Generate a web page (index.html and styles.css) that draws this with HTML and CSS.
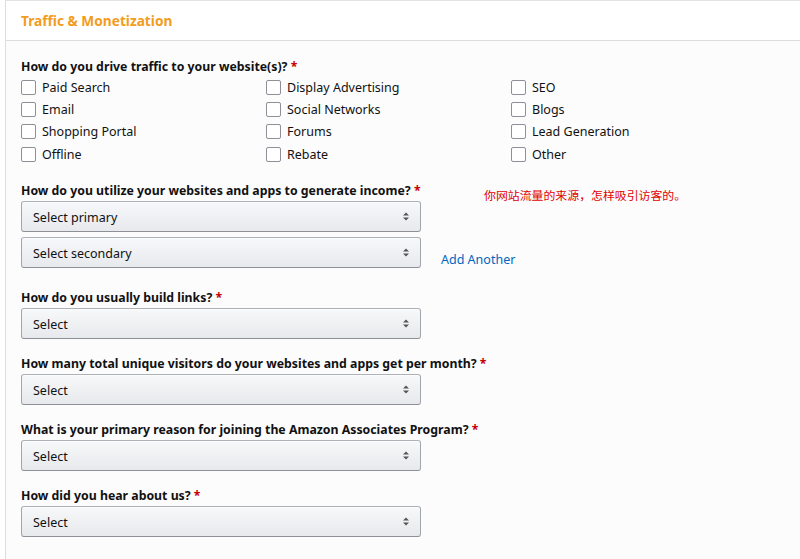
FILE: index.html
```html
<!DOCTYPE html>
<html>
<head>
<meta charset="utf-8">
<link rel="stylesheet" href="styles.css">
</head>
<body>
<div class="panel">
  <div class="panel-head"><h2 class="title">Traffic &amp; Monetization</h2></div>
  <div class="panel-body">
    <div class="q q-first">
      <div class="qlabel">How do you drive traffic to your website(s)? <span class="req">*</span></div>
      <div class="checks">
        <label class="chk"><span class="box"></span>Paid Search</label>
        <label class="chk"><span class="box"></span>Display Advertising</label>
        <label class="chk"><span class="box"></span>SEO</label>
        <label class="chk"><span class="box"></span>Email</label>
        <label class="chk"><span class="box"></span>Social Networks</label>
        <label class="chk"><span class="box"></span>Blogs</label>
        <label class="chk"><span class="box"></span>Shopping Portal</label>
        <label class="chk"><span class="box"></span>Forums</label>
        <label class="chk"><span class="box"></span>Lead Generation</label>
        <label class="chk"><span class="box"></span>Offline</label>
        <label class="chk"><span class="box"></span>Rebate</label>
        <label class="chk"><span class="box"></span>Other</label>
      </div>
    </div>

    <div class="q q-income">
      <div class="qrow">
        <div class="qlabel qlabel-fixed">How do you utilize your websites and apps to generate income? <span class="req">*</span></div>
        <div class="note">你网站流量的来源，怎样吸引访客的。</div>
      </div>
      <div class="sel"><span class="sel-text">Select primary</span><svg class="arr" width="6" height="9" viewBox="0 0 6 9"><path d="M0 3.5L3 0.5L6 3.5Z M0 5.5L3 8.5L6 5.5Z" fill="#555"/></svg></div>
      <div class="selrow">
        <div class="sel"><span class="sel-text">Select secondary</span><svg class="arr" width="6" height="9" viewBox="0 0 6 9"><path d="M0 3.5L3 0.5L6 3.5Z M0 5.5L3 8.5L6 5.5Z" fill="#555"/></svg></div>
        <a class="add">Add Another</a>
      </div>
    </div>

    <div class="q">
      <div class="qlabel">How do you usually build links? <span class="req">*</span></div>
      <div class="sel"><span class="sel-text">Select</span><svg class="arr" width="6" height="9" viewBox="0 0 6 9"><path d="M0 3.5L3 0.5L6 3.5Z M0 5.5L3 8.5L6 5.5Z" fill="#555"/></svg></div>
    </div>

    <div class="q">
      <div class="qlabel">How many total unique visitors do your websites and apps get per month? <span class="req">*</span></div>
      <div class="sel"><span class="sel-text">Select</span><svg class="arr" width="6" height="9" viewBox="0 0 6 9"><path d="M0 3.5L3 0.5L6 3.5Z M0 5.5L3 8.5L6 5.5Z" fill="#555"/></svg></div>
    </div>

    <div class="q">
      <div class="qlabel">What is your primary reason for joining the Amazon Associates Program? <span class="req">*</span></div>
      <div class="sel"><span class="sel-text">Select</span><svg class="arr" width="6" height="9" viewBox="0 0 6 9"><path d="M0 3.5L3 0.5L6 3.5Z M0 5.5L3 8.5L6 5.5Z" fill="#555"/></svg></div>
    </div>

    <div class="q">
      <div class="qlabel">How did you hear about us? <span class="req">*</span></div>
      <div class="sel"><span class="sel-text">Select</span><svg class="arr" width="6" height="9" viewBox="0 0 6 9"><path d="M0 3.5L3 0.5L6 3.5Z M0 5.5L3 8.5L6 5.5Z" fill="#555"/></svg></div>
    </div>
  </div>
</div>
</body>
</html>
```
FILE: styles.css
```css
html, body {
  margin: 0;
  padding: 0;
  background: #ffffff;
  font-family: "Noto Sans", "Liberation Sans", Arial, sans-serif;
  color: #111111;
  font-size: 12.5px;
}
.panel {
  margin-left: 5px;
  margin-right: -10px;
  border: 1px solid #dddddd;
  border-top-color: #e3e3e3;
  height: 570px;
  background: #fcfcfd;
}
.panel-head {
  background: #ffffff;
  border-bottom: 1px solid #dddddd;
  height: 39px;
  padding: 0 15px;
  display: flex;
  align-items: center;
}
.title {
  margin: 0;
  font-size: 13.7px;
  font-weight: 700;
  color: #f39c20;
  line-height: 20px;
  padding-top: 1px;
}
.panel-body {
  padding: 17px 15px 0 15px;
}
.q {
  margin-bottom: 16px;
}
.qlabel {
  font-weight: 700;
  font-size: 12.3px;
  line-height: 18px;
  color: #111111;
  margin-bottom: 1px;
}
.req {
  color: #c40000;
}
.checks {
  display: grid;
  grid-template-columns: 245px 245px 245px;
  row-gap: 5px;
  margin-top: 3px;
}
.chk {
  display: flex;
  align-items: center;
  height: 17px;
  font-size: 12.5px;
  color: #111111;
}
.chk:nth-child(n+10) {
  margin-top: 1px;
}
.box {
  width: 13px;
  height: 13px;
  border: 1px solid #8d9096;
  border-radius: 2px;
  background: #ffffff;
  margin-right: 6px;
  box-sizing: content-box;
}
.q-first {
  margin-bottom: 19px;
}
.q-income {
  margin-bottom: 21px;
}
.qrow {
  display: flex;
  align-items: flex-start;
}
.qlabel-fixed {
  width: 463px;
  flex: none;
}
.note {
  font-family: "Noto Sans CJK SC", sans-serif;
  font-size: 11.9px;
  color: #e00000;
  margin-top: 6px;
  margin-bottom: -2px;
  line-height: 14px;
}
.sel {
  border: 1px solid #adb1b8;
  border-color: #adb1b8 #a2a6ac #8d9096;
  border-radius: 3px;
  background: linear-gradient(to bottom, #f7f8fa, #e7e9ec);
  box-shadow: inset 0 1px 0 rgba(255,255,255,0.6);
  display: flex;
  align-items: center;
  justify-content: space-between;
  padding: 0 11px;
  box-sizing: border-box;
  width: 400px;
  height: 31px;
  font-size: 12.5px;
  color: #111111;
}
.sel-text {
  padding-top: 1px;
}
.q-income .sel + .selrow {
  margin-top: 5px;
}
.selrow {
  display: flex;
  align-items: flex-end;
}
.add {
  color: #0066c0;
  font-size: 12.5px;
  margin-left: 20px;
  line-height: 19px;
  margin-bottom: -1px;
}
```
